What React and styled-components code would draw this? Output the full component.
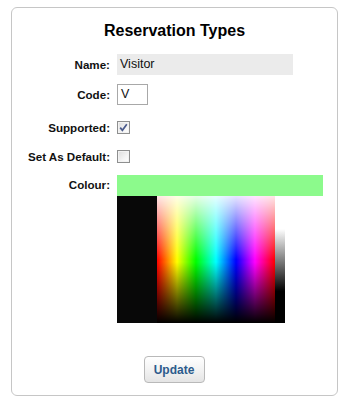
import React from "react";
import styled, { createGlobalStyle } from "styled-components";

const Global = createGlobalStyle`
  html, body { margin: 0; padding: 0; background: #fff; }
  body { font-family: "Liberation Sans", Arial, sans-serif; color: #111; }
`;

const Card = styled.div`
  box-sizing: border-box;
  margin: 7px 0 0 11px;
  width: 327px;
  border: 1px solid #c6c6c6;
  border-radius: 6px;
  padding: 0 0 12px;
  display: flex;
  flex-direction: column;
`;

const Title = styled.h1`
  margin: 13px 0 0;
  font-size: 16px;
  line-height: 20px;
  font-weight: bold;
  text-align: center;
  color: #000;
`;

const Row = styled.div`
  display: flex;
  align-items: ${(p) => (p.$top ? "flex-start" : "center")};
  margin-top: ${(p) => p.$gap}px;
  min-height: ${(p) => p.$h}px;
`;

const Label = styled.label`
  box-sizing: border-box;
  width: 98px;
  flex: none;
  text-align: right;
  font-size: 11.6px;
  font-weight: bold;
  color: #111;
  margin-right: 7px;
  white-space: nowrap;
  ${(p) => p.$offset && `margin-top: ${p.$offset}px;`}
`;

const NameInput = styled.div`
  box-sizing: border-box;
  width: 176px;
  height: 21px;
  background: #ebebeb;
  padding-left: 3px;
  font-size: 12.5px;
  line-height: 21px;
  color: #111;
`;

const CodeInput = styled.div`
  box-sizing: border-box;
  width: 31px;
  height: 21px;
  border: 1px solid #a8a8a8;
  padding-left: 3px;
  font-size: 12.5px;
  line-height: 19px;
  color: #111;
`;

const Box = styled.span`
  box-sizing: border-box;
  width: 13px;
  height: 13px;
  border: 1px solid #8e8f8f;
  background: linear-gradient(135deg, #dcdcdc 0%, #f4f4f4 60%, #ffffff 100%);
  display: flex;
  align-items: center;
  justify-content: center;
  box-shadow: inset 0 0 0 1px #f2f2f2;
`;

const Check = ({ checked }) => (
  <Box>
    {checked && (
      <svg width="9" height="9" viewBox="0 0 9 9">
        <path d="M1.2 4.6 L3.4 7.3 L7.8 1.2" fill="none" stroke="#4a5a8c" strokeWidth="1.7" />
      </svg>
    )}
  </Box>
);

const ColourCol = styled.div`
  display: flex;
  flex-direction: column;
`;

const Swatch = styled.div`
  width: 206px;
  height: 21px;
  background: ${(p) => p.$color};
`;

const Picker = styled.div`
  display: flex;
  height: 127px;
  width: 168px;
`;

const Black = styled.div`
  width: 40px;
  background: #080808;
`;

const Hue = styled.div`
  width: 118px;
  background:
    linear-gradient(to bottom, rgba(255,255,255,0.9) 0%, rgba(255,255,255,0) 50%, rgba(0,0,0,0) 52%, rgba(0,0,0,1) 100%),
    linear-gradient(to right, #f00 0%, #ff0 17%, #0f0 33%, #0ff 50%, #00f 67%, #f0f 83%, #f00 100%);
`;

const Gray = styled.div`
  width: 10px;
  background: linear-gradient(to bottom, #fff 0%, #fff 26%, #000 75%, #000 100%);
`;

const ButtonRow = styled.div`
  display: flex;
  justify-content: center;
  margin-top: 33px;
`;

const Button = styled.button`
  box-sizing: border-box;
  width: 61px;
  height: 27px;
  border: 1px solid #b9b9b9;
  border-radius: 4px;
  background: linear-gradient(to bottom, #ffffff 0%, #f3f3f3 50%, #e4e4e4 100%);
  color: #2c5b8c;
  font-family: "Liberation Sans", Arial, sans-serif;
  font-size: 12px;
  font-weight: bold;
  padding: 0;
  margin-left: -1px;
`;

export default function App() {
  return (
    <>
      <Global />
      <Card>
        <Title>Reservation Types</Title>
        <Row $gap={13} $h={21}>
          <Label>Name:</Label>
          <NameInput>Visitor</NameInput>
        </Row>
        <Row $gap={9} $h={21}>
          <Label>Code:</Label>
          <CodeInput>V</CodeInput>
        </Row>
        <Row $gap={16} $h={13}>
          <Label>Supported:</Label>
          <Check checked />
        </Row>
        <Row $gap={16} $h={13}>
          <Label>Set As Default:</Label>
          <Check />
        </Row>
        <Row $gap={12} $h={21} $top>
          <Label $offset={3}>Colour:</Label>
          <ColourCol>
            <Swatch $color="#8cfa8c" />
            <Picker>
              <Black />
              <Hue />
              <Gray />
            </Picker>
          </ColourCol>
        </Row>
        <ButtonRow>
          <Button>Update</Button>
        </ButtonRow>
      </Card>
    </>
  );
}
